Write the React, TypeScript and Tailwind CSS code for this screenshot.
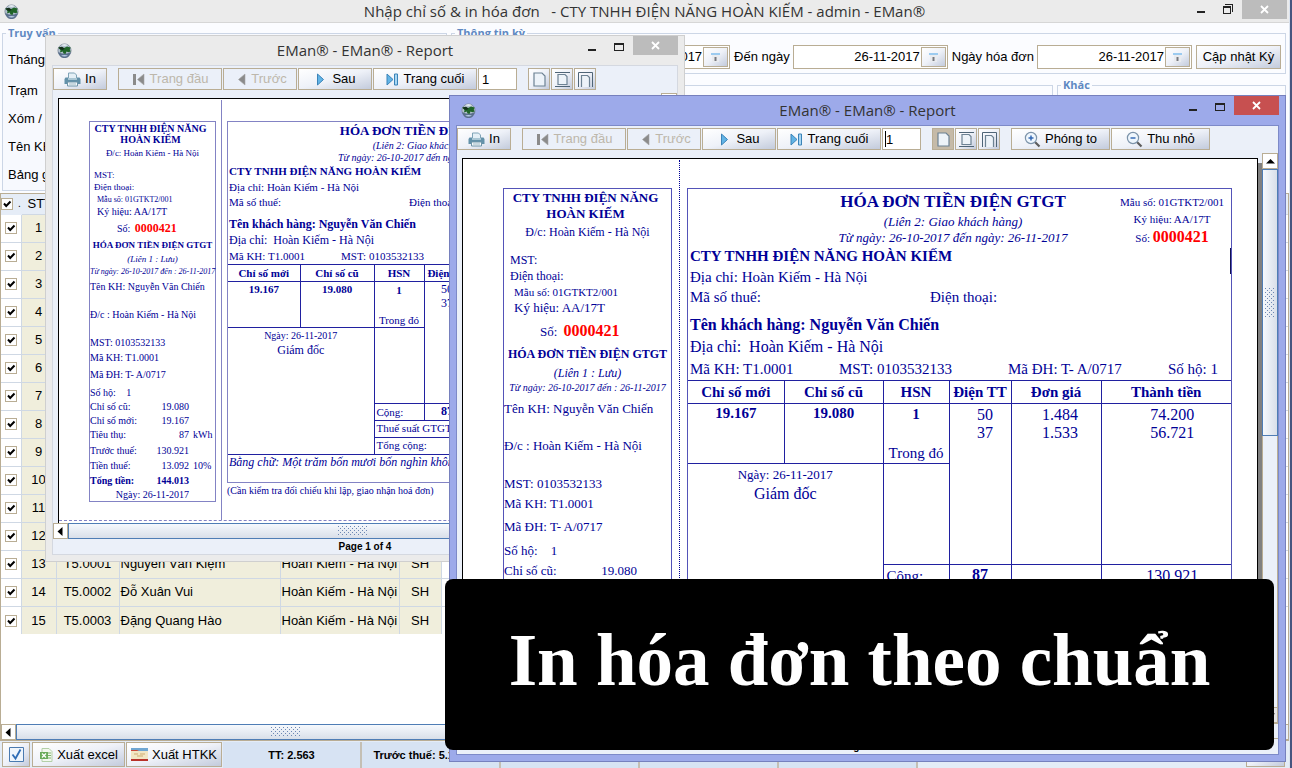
import type { ReactNode } from 'react'
import clsx from 'clsx'

interface Customer {
  no: number
  code?: string
  name?: string
  address?: string
  kind?: string
}

const ADDRESS = 'Hoàn Kiếm - Hà Nội'

const CUSTOMERS: Customer[] = [
  ...Array.from({ length: 12 }, (_, i) => ({ no: i + 1 })),
  { no: 13, code: 'T5.0001', name: 'Nguyễn Văn Kiệm', address: ADDRESS, kind: 'SH' },
  { no: 14, code: 'T5.0002', name: 'Đỗ Xuân Vui', address: ADDRESS, kind: 'SH' },
  { no: 15, code: 'T5.0003', name: 'Đặng Quang Hào', address: ADDRESS, kind: 'SH' },
]

const FACE = 'bg-linear-to-br from-white via-[#eef1f8] to-[#c3cbdc]'
const BTN = clsx(
  'flex items-center justify-center border border-[#b9ad94] text-[13px] whitespace-nowrap text-black',
  FACE,
)

/* ---------- icons ---------- */

function Globe() {
  return (
    <svg width="15" height="15" viewBox="0 0 15 15" aria-hidden="true">
      <circle cx="7.5" cy="7.5" r="6.6" fill="#b4c2d0" stroke="#7c8998" strokeWidth="0.8" />
      <path d="M1.2 8.8a6.3 6.3 0 0 0 12.600 0c-3 2.600-9.600 2.600-12.600 0z" fill="#5a6f8c" />
      <path d="M4 12.500c2 1.200 5 1.200 7 0-2-.8-5-.8-7 0z" fill="#b9cfe6" />
      <path d="M1.200 4.800 4 4l3 1 3-1.500 3.600 1-.8 2.300 1 1.700-2.500.8L9.500 8.500 8.500 11l-2-.5-.8-2L3 9.500 3.500 7z" fill="#1f6428" />
      <path d="M1.500 4.500 5 3.800 7.500 5.500 6 7 3.500 6.500z" fill="#15301b" />
      <path d="M4 2.200c2-1.300 5-1.300 7 0-2 .6-5 .6-7 0z" fill="#f4f8fb" />
    </svg>
  )
}

function Printer() {
  return (
    <svg width="17" height="15" viewBox="0 0 17 15" aria-hidden="true">
      <path d="M4.500 6V1h6l2 2v3" fill="#e4eff6" stroke="#7fa3b6" />
      <path d="M1.500 5.500H4v1.500h9V5.500h2.500l1 1.500v5H.5V7z" fill="#6391a9" />
      <path d="M4 6h9v2H4z" fill="#a9c6d4" />
      <path d="M3.500 10h10v4h-10z" fill="#f6fafc" stroke="#6f94a8" />
      <path d="M5 12h7" stroke="#9db7c4" />
    </svg>
  )
}

function NavIcon({ kind }: { kind: 'first' | 'prev' | 'next' | 'last' }) {
  const back = kind === 'first' || kind === 'prev'
  return (
    <svg width="13" height="13" viewBox="0 0 13 13" aria-hidden="true">
      {kind === 'first' && <path d="M1 1h3v11H1z" fill="#8b8b8b" />}
      {back ? (
        <path d="M12 1v11L5.500 6.500z" fill="#8b8b8b" stroke="#a5a5a5" strokeWidth="0.6" />
      ) : (
        <path d={kind === 'last' ? 'M1 1v11l6-5.500z' : 'M3.500 1v11l6-5.500z'} fill="#62b4e6" stroke="#3b83b8" />
      )}
      {kind === 'last' && <path d="M8.500 1h3v11h-3z" fill="#a9d7f3" stroke="#3b83b8" />}
    </svg>
  )
}

function PageIcon({ kind }: { kind: 'actual' | 'fit' | 'width' }) {
  return (
    <svg width="17" height="17" viewBox="0 0 17 17" fill="none" stroke="#6d8293" aria-hidden="true">
      {kind === 'actual' && <path d="M3 2h8l3 3v10H3z" fill="#edf3f9" strokeWidth="1.2" />}
      {kind === 'fit' && (
        <>
          <path d="M1 1.500h15M1 15.500h15" stroke="#4f6577" />
          <path d="M4 3.500h7l2 2v8H4z" fill="#edf3f9" strokeWidth="1.2" />
        </>
      )}
      {kind === 'width' && (
        <>
          <path d="M1.500 16V1.500h14V16" stroke="#4f6577" />
          <path d="M4.500 16V4.500h6l2 2V16" fill="#edf3f9" strokeWidth="1.2" />
        </>
      )}
    </svg>
  )
}

function Magnifier({ plus }: { plus?: boolean }) {
  return (
    <svg width="17" height="17" viewBox="0 0 17 17" fill="none" aria-hidden="true">
      <path d="m11 11 4.500 4.500" stroke="#5c5c5c" strokeWidth="2.2" />
      <circle cx="7" cy="7" r="5.600" fill="#eef6fd" stroke="#7c93a9" strokeWidth="1.2" />
      <path d="M4.500 7h5" stroke="#2a62b0" strokeWidth="1.4" />
      {plus && <path d="M7 4.500v5" stroke="#2a62b0" strokeWidth="1.4" />}
    </svg>
  )
}

function CalendarIcon() {
  return (
    <svg width="11" height="11" viewBox="0 0 11 11" aria-hidden="true">
      <path d="M1 1h9v2H1z" fill="#9ccbf0" />
      <path d="M2 3h7v7H2z" fill="#e9ebef" />
      <path d="M4.500 5h2v4h-2z" fill="#77797f" />
    </svg>
  )
}

function ExcelIcon() {
  return (
    <svg width="14" height="14" viewBox="0 0 14 14" aria-hidden="true">
      <path d="M3 .5h7l3 3v10H3z" fill="#f2f8ef" stroke="#b3cfa8" />
      <path d="M9 5h3M9 7.500h3M9 10h3" stroke="#7db36b" />
      <path d="M1 4h8v7H1z" fill="#6aab5b" />
      <path d="m3 5.500 4 4m0-4-4 4" stroke="#fff" strokeWidth="1.3" />
    </svg>
  )
}

function HtkkIcon() {
  return (
    <svg width="17" height="13" viewBox="0 0 17 13" aria-hidden="true">
      <path d="M0 0h17v13H0z" fill="#f2e6c4" />
      <path d="M0 0h17v3H0z" fill="#6fa6d2" />
      <path d="M0 2h6l2 1H0z" fill="#c9483a" />
      <path d="M0 11h17v2H0z" fill="#b8322a" />
      <path d="M3 6h4M9 6h5M6 8h6" stroke="#cfab70" />
    </svg>
  )
}

function Grip({ vertical }: { vertical?: boolean }) {
  const cols = vertical ? 5 : 15
  const rows = vertical ? 15 : 5
  const dots = Array.from({ length: cols * rows }, (_, i) => [i % cols, Math.floor(i / cols)])
  return (
    <svg width={cols * 2} height={rows * 2} shapeRendering="crispEdges" aria-hidden="true">
      {dots
        .filter(([x, y]) => (x + y) % 2 === 0)
        .map(([x, y]) => (
          <rect key={`${x}-${y}`} x={x * 2} y={y * 2} width="1" height="1" fill="#6d87b3" />
        ))}
    </svg>
  )
}

function Arrow({ d }: { d: string }) {
  return (
    <svg width="9" height="9" viewBox="0 0 9 9" aria-hidden="true">
      <path d={d} fill="#000" />
    </svg>
  )
}

/* ---------- window parts ---------- */

function TitleBar({ title, close, tall, restore }: { title: string; close: string; tall?: boolean; restore?: boolean }) {
  const box = clsx('flex items-center justify-center', tall ? 'h-[21px]' : 'h-[18px]')
  return (
    <div className={clsx('flex shrink-0 items-start', tall ? 'h-[29px]' : 'h-[22px]')}>
      <div className={clsx('w-[140px] shrink-0', tall ? 'pt-[7px] pl-[10px]' : 'pt-1 pl-1')}>
        <Globe />
      </div>
      <h1
        className={clsx(
          "flex-1 text-center font-['Open_Sans',sans-serif] text-[15px] whitespace-pre text-[#333]",
          tall ? 'leading-[29px]' : 'leading-[23px]',
        )}
      >
        {title}
      </h1>
      <div className={clsx('flex w-[140px] shrink-0 justify-end', tall ? 'pr-[5px]' : 'pr-[2px]')}>
        <button aria-label="Thu nhỏ cửa sổ" className={clsx(box, 'w-[26px]')}>
          <svg width="8" height="10" aria-hidden="true">
            <path d="M0 7h8v2H0z" fill="#222" />
          </svg>
        </button>
        <button aria-label="Phóng to cửa sổ" className={clsx(box, 'w-[28px]')}>
          <svg width="12" height="12" fill="none" stroke="#222" shapeRendering="crispEdges" aria-hidden="true">
            {restore ? (
              <>
                <path d="M1.500 4.500h7v6h-7zM1 3.500h8" />
                <path d="M3 1.500h7.500V9" />
              </>
            ) : (
              <path d="M1.500 2.500h9v7h-9zM1 3.500h10" />
            )}
          </svg>
        </button>
        <button aria-label="Đóng" className={clsx('flex h-[19px] w-[45px] items-center justify-center', close)}>
          <svg width="9" height="9" viewBox="0 0 9 9" aria-hidden="true">
            <path d="m1 1 7 7m0-7L1 8" stroke="#fff" strokeWidth="1.8" />
          </svg>
        </button>
      </div>
    </div>
  )
}

function HScroll({ thumb }: { thumb: string }) {
  return (
    <div className="flex h-4 shrink-0 bg-[#ebf0f9]">
      <button aria-label="Cuộn trái" className="flex w-[15px] items-center justify-center border border-[#b9ad94] bg-white">
        <Arrow d="M6.500 0v9L1.500 4.500z" />
      </button>
      <div
        className={clsx(
          'flex items-center justify-center border border-[#4f7db5] bg-linear-to-b from-[#f6f9fd] to-[#d9dfe9]',
          thumb,
        )}
      >
        <Grip />
      </div>
      <div className="flex-1 border-y border-[#b9ad94]" />
    </div>
  )
}

function VScroll() {
  return (
    <div className="flex w-4 shrink-0 flex-col bg-[#ebf0f9]">
      <button aria-label="Cuộn lên" className="flex h-4 shrink-0 items-center justify-center border border-[#b9ad94] bg-white">
        <Arrow d="M0 6.500h9L4.500 2z" />
      </button>
      <div className="flex h-[267px] shrink-0 items-center justify-center border border-[#4f7db5] bg-linear-to-r from-[#f6f9fd] to-[#d9dfe9]">
        <Grip vertical />
      </div>
      <div className="flex-1 border-x border-[#b9ad94]" />
      <button aria-label="Cuộn xuống" className="flex h-4 shrink-0 items-center justify-center border border-[#b9ad94] bg-[#e4e4e4]">
        <Arrow d="M0 2.500h9L4.500 7z" />
      </button>
    </div>
  )
}

function NavButton({ kind, width, children }: { kind: 'first' | 'prev' | 'next' | 'last'; width: string; children: ReactNode }) {
  const disabled = kind === 'first' || kind === 'prev'
  return (
    <button
      disabled={disabled}
      className={clsx(
        'mr-px flex h-[22px] shrink-0 items-center justify-center gap-[5px] border border-[#b9ad94] text-[13px] whitespace-nowrap',
        disabled ? 'bg-[#ebf0f9] text-[#bdb7ab]' : clsx(FACE, 'text-black'),
        width,
      )}
    >
      <NavIcon kind={kind} />
      {children}
    </button>
  )
}

function Toolbar({ id, zoomed }: { id: string; zoomed: boolean }) {
  const square = 'mr-px flex h-[22px] w-[22px] shrink-0 items-center justify-center border border-[#b9ad94]'
  return (
    <div className="flex h-[27px] shrink-0 items-start pt-[2px]">
      <button className={clsx(BTN, 'mr-[11px] h-[22px] w-[54px] shrink-0 gap-1')}>
        <Printer />
        In
      </button>
      <NavButton kind="first" width="w-[104px]">Trang đầu</NavButton>
      <NavButton kind="prev" width="w-[74px]">Trước</NavButton>
      <NavButton kind="next" width="w-[74px]">Sau</NavButton>
      <NavButton kind="last" width="w-[104px]">Trang cuối</NavButton>
      <div className="relative mr-[11px] shrink-0">
        <input
          id={id}
          aria-label="Trang"
          defaultValue="1"
          className="h-[22px] w-[39px] border border-[#b9ad94] bg-white px-[3px] text-[13px] text-black"
        />
        {zoomed && <span className="absolute top-[3px] left-[3px] h-4 w-px bg-black" />}
      </div>
      <button aria-label="Cỡ thật" className={clsx(square, zoomed ? 'bg-[#c5baa8]' : FACE)}>
        <PageIcon kind="actual" />
      </button>
      <button aria-label="Vừa trang" className={clsx(square, FACE)}>
        <PageIcon kind="fit" />
      </button>
      <button aria-label="Vừa chiều rộng" className={clsx(square, FACE)}>
        <PageIcon kind="width" />
      </button>
      {zoomed && (
        <>
          <button className={clsx(BTN, 'mr-px ml-[10px] h-[22px] w-[99px] shrink-0 gap-1')}>
            <Magnifier plus />
            Phóng to
          </button>
          <button className={clsx(BTN, 'h-[22px] w-[99px] shrink-0 gap-1')}>
            <Magnifier />
            Thu nhỏ
          </button>
        </>
      )}
    </div>
  )
}

/* ---------- invoice ---------- */

function Amount({ label, value, unit, zoomed, bold }: { label: string; value: string; unit?: string; zoomed: boolean; bold?: boolean }) {
  return (
    <p className={clsx('flex', bold && 'font-bold')}>
      <span className="flex-1">{label}</span>
      <span>{value}</span>
      <span className={zoomed ? 'w-[34px] pl-[5px]' : 'w-[26px] pl-1'}>{unit}</span>
    </p>
  )
}

function Stub({ zoomed }: { zoomed: boolean }) {
  const z = (big: string, small: string) => (zoomed ? big : small)
  return (
    <div
      className={clsx(
        'shrink-0 self-start border whitespace-nowrap',
        z(
          'mt-[29px] ml-[40px] w-[169px] border-[#5353b8] text-[13px] leading-5',
          'mt-[22px] ml-[30px] w-[127px] border-[#8383c4] text-[10px] leading-3',
        ),
      )}
    >
      <h2 className={clsx('text-center font-bold', z('pt-px pr-1 text-[13px] leading-4', 'pt-px pr-1 text-[10px] leading-[11px]'))}>
        CTY TNHH ĐIỆN NĂNG
        <br />
        HOÀN KIẾM
      </h2>
      <p className={clsx('text-center', z('text-[12px]', 'mt-[2px] text-[9px]'))}>Đ/c: Hoàn Kiếm - Hà Nội</p>
      <p className={z('mt-2 pl-[6px] text-[12px]', 'mt-[10px] pl-1 text-[9px]')}>MST:</p>
      <p className={z('pl-[6px] text-[12px] leading-3', 'pl-1 text-[9px]')}>Điện thoại:</p>
      <p className={z('pl-[10px] text-[11px]', 'mt-px pl-[7px] text-[8px]')}>Mẫu số: 01GTKT2/001</p>
      <p className={z('pl-[10px] leading-3', 'pl-[7px]')}>Ký hiệu: AA/17T</p>
      <p className={z('mt-[7px] pl-[36px]', 'mt-1 pl-[27px]')}>
        Số: <b className={z('ml-[3px] text-[16px] text-[#f00]', 'ml-[2px] text-[12px] text-[#f00]')}>0000421</b>
      </p>
      <p className={clsx('text-center font-bold', z('mt-[2px] text-[12px]', 'mt-1 text-[9px]'))}>HÓA ĐƠN TIỀN ĐIỆN GTGT</p>
      <p className={clsx('text-center italic', z('text-[12px] leading-[18px]', 'mt-[2px] text-[9px]'))}>(Liên 1 : Lưu)</p>
      <p className={clsx('text-center italic', z('text-[10px] leading-3', 'mt-px text-[8px]'))}>
        Từ ngày: 26-10-2017 đến : 26-11-2017
      </p>
      <p className={z('mt-[5px]', 'mt-[3px]')}>Tên KH: Nguyễn Văn Chiến</p>
      <p className={z('mt-[17px]', 'mt-4')}>Đ/c : Hoàn Kiếm - Hà Nội</p>
      <p className={z('mt-[18px]', 'mt-4')}>MST: 0103532133</p>
      <p className={z('', 'mt-[3px]')}>Mã KH: T1.0001</p>
      <p className={z('mt-[3px]', 'mt-[5px]')}>Mã ĐH: T- A/0717</p>
      <p className={z('mt-1', 'mt-[6px]')}>
        Số hộ: <span className={z('ml-[10px]', 'ml-2')}>1</span>
      </p>
      <div className={z('', 'mt-[2px] space-y-[2px]')}>
        <Amount zoomed={zoomed} label="Chỉ số cũ:" value="19.080" />
        <Amount zoomed={zoomed} label="Chỉ số mới:" value="19.167" />
        <Amount zoomed={zoomed} label="Tiêu thụ:" value="87" unit="kWh" />
      </div>
      <div className={z('', 'mt-1 space-y-[3px]')}>
        <Amount zoomed={zoomed} label="Trước thuế:" value="130.921" />
        <Amount zoomed={zoomed} label="Tiền thuế:" value="13.092" unit="10%" />
        <Amount zoomed={zoomed} bold label="Tổng tiền:" value="144.013" />
      </div>
      <p className={clsx('text-right', z('pr-[34px]', 'mt-[2px] pr-[26px]'))}>Ngày: 26-11-2017</p>
    </div>
  )
}

function InvoiceTable({ zoomed }: { zoomed: boolean }) {
  const z = (big: string, small: string) => (zoomed ? big : small)
  const cell = 'border border-[#2020a0] p-0'
  const row = z('h-[23px]', 'h-[17px]')
  return (
    <table
      className={clsx(
        'w-full table-fixed border-collapse border-hidden text-center',
        z('text-[15px] leading-[18px]', 'text-[11px] leading-[14px]'),
      )}
    >
      <colgroup>
        <col className={z('w-[96px]', 'w-[72px]')} />
        <col className={z('w-[99px]', 'w-[74px]')} />
        <col className={z('w-[66px]', 'w-[50px]')} />
        <col className={z('w-[62px]', 'w-[46px]')} />
        <col className={z('w-[90px]', 'w-[67px]')} />
        <col />
      </colgroup>
      <thead>
        <tr className={z('h-[22px]', 'h-4')}>
          {['Chỉ số mới', 'Chỉ số cũ', 'HSN', 'Điện TT', 'Đơn giá', 'Thành tiền'].map((h) => (
            <th key={h} className={clsx(cell, 'font-bold whitespace-nowrap')}>
              {h}
            </th>
          ))}
        </tr>
      </thead>
      <tbody className="align-top">
        <tr className={z('h-[60px]', 'h-[45px]')}>
          <td className={clsx(cell, 'font-bold')}>19.167</td>
          <td className={clsx(cell, 'font-bold')}>19.080</td>
          <td className={clsx(cell, 'pt-px')}>
            <b>1</b>
            <p className={z('mt-[21px]', 'mt-4')}>Trong đó</p>
          </td>
          <td rowSpan={2} className={clsx(cell, z('pt-[2px] pl-[10px] text-[16px]', 'text-[12px]'))}>
            50
            <br />
            37
          </td>
          <td rowSpan={2} className={clsx(cell, z('pt-[2px] pl-2 text-[16px]', 'text-[12px]'))}>
            1.484
            <br />
            1.533
          </td>
          <td rowSpan={2} className={clsx(cell, z('pt-[2px] pl-3 text-[16px]', 'text-[12px]'))}>
            74.200
            <br />
            56.721
          </td>
        </tr>
        <tr className={z('h-[101px]', 'h-[76px]')}>
          <td colSpan={2} rowSpan={4} className={cell}>
            <p className={z('mt-[2px] text-[13px]', 'mt-px text-[10px]')}>Ngày: 26-11-2017</p>
            <p className={z('mt-px text-[16px]', 'text-[12px]')}>Giám đốc</p>
          </td>
          <td className={cell} />
        </tr>
        <tr className={row}>
          <td className={clsx(cell, 'text-left', z('pt-[2px] pl-[3px]', 'pt-px pl-[2px]'))}>Cộng:</td>
          <td className={clsx(cell, 'font-bold', z('pt-px text-[16px]', 'text-[12px]'))}>87</td>
          <td className={cell} />
          <td className={clsx(cell, z('pt-[2px] pl-3 text-[16px]', 'text-[12px]'))}>130.921</td>
        </tr>
        <tr className={row}>
          <td colSpan={4} className={clsx(cell, 'pl-[2px] text-left')}>Thuế suất GTGT:</td>
        </tr>
        <tr className={row}>
          <td colSpan={4} className={clsx(cell, 'pl-[2px] text-left')}>Tổng cộng:</td>
        </tr>
      </tbody>
    </table>
  )
}

function Invoice({ zoomed }: { zoomed: boolean }) {
  const z = (big: string, small: string) => (zoomed ? big : small)
  return (
    <div className={clsx('shrink-0 whitespace-nowrap', z('mt-[29px] w-[545px]', 'mt-[22px] w-[406px]'))}>
      <div className={clsx('relative border', z('border-[#5353b8]', 'border-[#8383c4]'))}>
        {zoomed && <span className="absolute top-[59px] right-0 h-[26px] w-px bg-[#101050]" />}
        <div className="flex">
          <div className={z('w-[145px]', 'w-[108px]')} />
          <div className={clsx('text-center italic', z('w-[240px] text-[13px] leading-4', 'w-[180px] text-[10px] leading-3'))}>
            <h2 className={clsx('font-bold not-italic', z('pt-px text-[17px] leading-6', 'text-[13px] leading-[18px]'))}>
              HÓA ĐƠN TIỀN ĐIỆN GTGT
            </h2>
            <p>(Liên 2: Giao khách hàng)</p>
            <p>Từ ngày: 26-10-2017 đến ngày: 26-11-2017</p>
          </div>
          <div className={clsx('flex-1 text-center', z('pt-[5px] pl-[40px] text-[11px] leading-[17px]', 'pt-1 pl-[30px] text-[8px] leading-3'))}>
            <p>Mẫu số: 01GTKT2/001</p>
            <p>Ký hiệu: AA/17T</p>
            <p>
              Số: <b className={z('text-[16px] text-[#f00]', 'text-[12px] text-[#f00]')}>0000421</b>
            </p>
          </div>
        </div>
        <div className={z('pb-px pl-[2px] text-[15px] leading-5', 'pl-px text-[11px] leading-[15px]')}>
          <p className={clsx('font-bold', z('-mt-px', ''))}>CTY TNHH ĐIỆN NĂNG HOÀN KIẾM</p>
          <p className="mt-px">Địa chỉ: Hoàn Kiếm - Hà Nội</p>
          <p className={clsx('grid', z('grid-cols-[240px_1fr]', 'grid-cols-[180px_1fr]'))}>
            <span>Mã số thuế:</span>
            <span>Điện thoại:</span>
          </p>
          <p className={clsx('font-bold', z('mt-2 text-[16px]', 'mt-[7px] text-[12px]'))}>Tên khách hàng: Nguyễn Văn Chiến</p>
          <p className={clsx('whitespace-pre', z('mt-[2px] text-[16px]', 'mt-px text-[12px]'))}>Địa chỉ:  Hoàn Kiếm - Hà Nội</p>
          <p
            className={clsx(
              'grid',
              z('mt-[2px] grid-cols-[149px_169px_160px_1fr]', 'mt-px grid-cols-[112px_126px_119px_1fr]'),
            )}
          >
            <span>Mã KH: T1.0001</span>
            <span>MST: 0103532133</span>
            <span>Mã ĐH: T- A/0717</span>
            <span>Số hộ: 1</span>
          </p>
        </div>
        <div className="border-y border-[#2020a0]">
          <InvoiceTable zoomed={zoomed} />
        </div>
        <p className={clsx('italic', z('h-9 pl-1 text-[16px]', 'h-[27px] pl-px text-[12px] leading-[14px]'))}>
          Bằng chữ: Một trăm bốn mươi bốn nghìn không trăm mười ba đồng.
        </p>
      </div>
      <p className={z('text-[13px]', 'mt-px text-[10px] leading-[14px]')}>
        (Cần kiểm tra đối chiếu khi lập, giao nhận hoá đơn)
      </p>
    </div>
  )
}

function ReportPane({ id, zoomed }: { id: string; zoomed: boolean }) {
  return (
    <div className="flex min-h-0 flex-1 flex-col bg-[#ebf0f9]">
      <Toolbar id={id} zoomed={zoomed} />
      <div className="flex min-h-0 flex-1">
        <div className="flex min-w-0 flex-1 overflow-hidden pt-[5px] pl-[5px]">
          <div className="flex min-w-0 flex-1 flex-col overflow-hidden border-t border-l border-black bg-white">
            <div
              className={clsx(
                "flex shrink-0 font-['Liberation_Serif',serif] text-[#000096]",
                zoomed ? 'h-[563px]' : 'h-[422px] border-b border-dashed border-[#8383c4]',
              )}
            >
              <Stub zoomed={zoomed} />
              <div
                className={clsx(
                  'mt-px shrink-0 border-l',
                  zoomed ? 'mr-[7px] ml-[7px] border-dotted border-[#000096]' : 'mr-[5px] ml-[5px] border-[#8383c4]',
                )}
              />
              <Invoice zoomed={zoomed} />
            </div>
          </div>
          {zoomed && (
            <div className="w-[5px] shrink-0 border-l border-black pt-[5px]">
              <div className="h-full bg-[#808080]" />
            </div>
          )}
        </div>
        <VScroll />
      </div>
      <HScroll thumb={zoomed ? 'w-[760px]' : 'w-[570px]'} />
      <p className="h-[15px] shrink-0 text-center text-[10px] leading-[15px] font-bold text-black">Page 1 of 4</p>
    </div>
  )
}

/* ---------- main window ---------- */

function Group({ legend, className, children }: { legend?: string; className?: string; children?: ReactNode }) {
  return (
    <fieldset className={clsx('min-w-0 border border-[#ccd6e6]', className)}>
      {legend && (
        <legend className="ml-[3px] h-[14px] px-[2px] font-['Open_Sans',sans-serif] text-[11px] leading-[14px] font-bold text-[#6089c2]">
          {legend}
        </legend>
      )}
      {children}
    </fieldset>
  )
}

function DateField({ id, label, value }: { id: string; label: string; value: string }) {
  return (
    <div className="flex items-center">
      <label htmlFor={id} className="pr-[3px] pl-1 whitespace-nowrap">
        {label}
      </label>
      <div className="flex h-6 w-[155px] border border-[#b9ad94] bg-white p-px">
        <input id={id} defaultValue={value} className="min-w-0 flex-1 bg-transparent pr-px text-right" />
        <button aria-label={`Chọn ${label}`} className={clsx(BTN, 'h-5 w-[25px]')}>
          <CalendarIcon />
        </button>
      </div>
    </div>
  )
}

function Tick({ label }: { label: string }) {
  return (
    <span className="inline-grid size-3 align-middle">
      <input
        type="checkbox"
        defaultChecked
        aria-label={label}
        className="col-start-1 row-start-1 size-3 appearance-none border border-[#b9ad94] bg-white"
      />
      <svg className="pointer-events-none col-start-1 row-start-1" width="12" height="12" fill="none" aria-hidden="true">
        <path d="m3 5.500 2.200 2.500L9.500 3.500" stroke="#000" strokeWidth="2" />
      </svg>
    </span>
  )
}

function CustomerTable() {
  const th = 'border border-[#cfd8e4] p-0 font-normal'
  const td = 'border border-[#cfd8e4] bg-[#f0eedc] px-px py-0'
  return (
    <table className="w-full table-fixed border-collapse border-hidden text-[13px] whitespace-nowrap">
      <colgroup>
        <col className="w-[20px]" />
        <col className="w-[35px]" />
        <col className="w-[63px]" />
        <col className="w-[161px]" />
        <col className="w-[119px]" />
        <col className="w-[42px]" />
        <col />
      </colgroup>
      <thead>
        <tr className="h-[19px] bg-[#e6edf7] text-left">
          <th className="border border-[#e6edf7] p-0 font-normal">
            <span className="flex items-end gap-[5px]">
              <Tick label="Chọn tất cả" />
              <span className="text-[10px] leading-3">.</span>
            </span>
          </th>
          <th className={clsx(th, 'pl-[6px]')}>STT</th>
          <th className={th} />
          <th className={th} />
          <th className={th} />
          <th className={th} />
          <th className={th} />
        </tr>
      </thead>
      <tbody>
        {CUSTOMERS.map((c) => (
          <tr key={c.no} className="h-7">
            <td className="border border-[#cfd8e4] bg-white p-0 text-center leading-3">
              <Tick label={`Chọn dòng ${c.no}`} />
            </td>
            <td className={clsx(td, 'text-center')}>{c.no}</td>
            <td className={clsx(td, 'text-center')}>{c.code}</td>
            <td className={td}>{c.name}</td>
            <td className={td}>{c.address}</td>
            <td className={clsx(td, 'text-center')}>{c.kind}</td>
            <td className="border border-[#cfd8e4] bg-white" />
          </tr>
        ))}
      </tbody>
    </table>
  )
}

function StatusCell({ children }: { children?: ReactNode }) {
  return (
    <div className="h-[26px] w-[139px] shrink-0 border-r-2 border-[#c4bfb4] bg-[#d7e3f3] text-center text-[11px] leading-[26px] font-bold whitespace-nowrap">
      {children}
    </div>
  )
}

function MainWindow() {
  return (
    <main className="flex min-h-screen min-w-0 flex-1 flex-col border-r border-[#dbe3ef] bg-[#fbfcff]">
      <div className="border-b border-[#d6d6d6] bg-[#ebebeb]">
        <TitleBar title="Nhập chỉ số & in hóa đơn   - CTY TNHH ĐIỆN NĂNG HOÀN KIẾM - admin - EMan®" close="bg-[#bcbcbc]" restore />
      </div>

      <div className="flex h-[170px] gap-1 px-[2px] pt-[3px] pr-[3px] pb-[2px]">
        <Group legend="Truy vấn" className="w-[445px] shrink-0 bg-[#f7f9fe]">
          <div className="flex flex-col px-[5px] pt-[6px] leading-7">
            {['Tháng', 'Trạm', 'Xóm / Thôn', 'Tên KH', 'Bảng giá'].map((label) => (
              <div key={label} className="flex items-center first:mb-[3px]">
                <label htmlFor={label} className="w-[100px] shrink-0">
                  {label}
                </label>
                <input id={label} className="h-5 min-w-0 flex-1 border border-[#b9ad94] bg-white" />
              </div>
            ))}
          </div>
        </Group>
        <div className="flex min-w-0 flex-1 flex-col gap-1">
          <Group legend="Thông tin kỳ" className="h-[48px] shrink-0">
            <div className="mt-[5px] flex items-center justify-end pr-1">
              <DateField id="from" label="Từ ngày" value="26-10-2017" />
              <DateField id="to" label="Đến ngày" value="26-11-2017" />
              <DateField id="invoice-date" label="Ngày hóa đơn" value="26-11-2017" />
              <button className={clsx(BTN, 'ml-1 h-6 w-[85px]')}>Cập nhật Kỳ</button>
            </div>
          </Group>
          <div className="flex min-h-0 flex-1 gap-1">
            <Group className="mt-[7px] flex-1" />
            <Group legend="Khác" className="w-[229px] shrink-0" />
          </div>
        </div>
      </div>

      <div className="flex flex-1 flex-col border border-b-0 border-[#b9ad94] bg-white">
        <div className="flex-1">
          <CustomerTable />
        </div>
        <HScroll thumb="w-[540px]" />
      </div>

      <footer className="flex h-[28px] items-start gap-px border-t border-[#b9ad94] bg-[#e4ecf7] pt-px pl-[2px]">
        <button aria-label="Chọn" className={clsx(BTN, 'mr-px h-[25px] w-[28px]')}>
          <svg width="15" height="15" fill="none" aria-hidden="true">
            <path d="M.5.5h14v14H.5z" fill="#eef5fc" stroke="#4a7ab0" />
            <path d="m3.500 7.500 3 4 5-9" stroke="#2f6db5" strokeWidth="1.8" />
          </svg>
        </button>
        <button className={clsx(BTN, 'h-[25px] w-[93px] gap-1')}>
          <ExcelIcon />
          Xuất excel
        </button>
        <button className={clsx(BTN, 'h-[25px] w-[96px] gap-1')}>
          <HtkkIcon />
          Xuất HTKK
        </button>
        <div className="flex min-w-0 flex-1 overflow-hidden">
          <StatusCell>TT: 2.563</StatusCell>
          <StatusCell>Trước thuế: 5.127.310</StatusCell>
          <StatusCell />
          <StatusCell />
          <StatusCell />
        </div>
        <button aria-label="Thoát" className={clsx(BTN, 'mr-1 h-[25px] w-[39px]')}>
          <svg width="12" height="12" aria-hidden="true">
            <circle cx="6" cy="6" r="5" fill="#c93a32" />
          </svg>
        </button>
      </footer>
    </main>
  )
}

export default function App() {
  return (
    <div className="relative flex min-h-screen w-full overflow-hidden bg-[#46557f] pr-[2px] font-['Liberation_Sans',Arial,sans-serif] text-[13px] text-black">
      <MainWindow />

      <section className="absolute top-[35px] left-[45px] flex h-[527px] w-[640px] flex-col border border-[#cfcfcf] bg-[#ebebeb] px-[6px] pb-[6px]">
        <div className="-mr-[5px] -ml-[5px]">
          <TitleBar title="EMan® - EMan® - Report" close="bg-[#bcbcbc]" tall />
        </div>
        <div className="flex min-h-0 flex-1 flex-col border border-[#d4d8e0]">
          <ReportPane id="page-back" zoomed={false} />
        </div>
      </section>

      <section className="absolute top-[95px] left-[449px] flex h-[667px] w-[837px] flex-col border border-[#7680bd] bg-[#9daaea] px-[6px] pb-[6px]">
        <div className="-mr-[5px] -ml-[5px]">
          <TitleBar title="EMan® - EMan® - Report" close="bg-[#c75050]" tall />
        </div>
        <div className="flex min-h-0 flex-1 flex-col border border-[#7d8ac8]">
          <ReportPane id="page-front" zoomed />
        </div>
      </section>

      <div className="absolute top-[579px] left-[445px] flex h-[171px] w-[829px] items-center justify-center rounded-lg bg-black pb-2">
        <p className="font-['Liberation_Serif',serif] text-[73px] leading-none font-bold whitespace-nowrap text-white">
          In hóa đơn theo chuẩn
        </p>
      </div>
    </div>
  )
}
